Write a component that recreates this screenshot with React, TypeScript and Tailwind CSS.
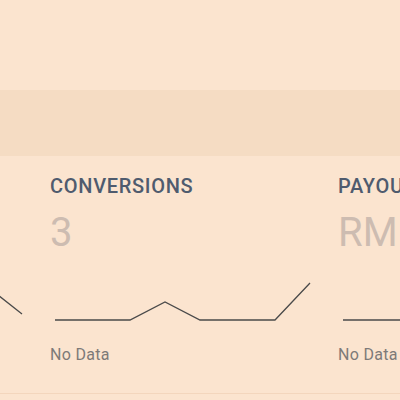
import React from "react";

type Stat = { label: string; value: string; points: string };

const stats: Stat[] = [
  { label: "CLICKS", value: "12", points: "5,50 80,50 115,40 150,30 222,14 260,44" },
  { label: "CONVERSIONS", value: "3", points: "5,50 80,50 115,32 150,50 225,50 260,13" },
  { label: "PAYOUT", value: "RM 0.00", points: "5,50 80,50 115,50 150,50 225,50 260,50" },
];

function StatCard({ stat }: { stat: Stat }) {
  return (
    <div className="w-[288px] shrink-0">
      <div className="text-[20px] leading-[24px] font-medium text-[#4f5b6e] tracking-[0.7px]">{stat.label}</div>
      <div className="mt-[15px] text-[40px] leading-[40px] text-[#cdbcb1]">{stat.value}</div>
      <svg width="265" height="60" className="mt-[17px] block" viewBox="0 0 265 60">
        <polyline points={stat.points} fill="none" stroke="#4a4a4a" strokeWidth="1.3" />
      </svg>
      <div className="mt-[15px] text-[16px] leading-[20px] text-[#7d7a78] tracking-[0.3px]">No Data</div>
    </div>
  );
}

export default function App() {
  return (
    <div className="w-[400px] h-[400px] overflow-hidden bg-[#fbe4cf] font-['Roboto',sans-serif]">
      <div className="h-[90px]" />
      <div className="h-[66px] bg-[#f5dcc3]" />
      <div className="pt-[18px] h-[238px] border-b border-[#f3d6bd] overflow-hidden">
        <div className="flex ml-[-238px]">
          {stats.map((s) => (
            <StatCard key={s.label} stat={s} />
          ))}
        </div>
      </div>
    </div>
  );
}
